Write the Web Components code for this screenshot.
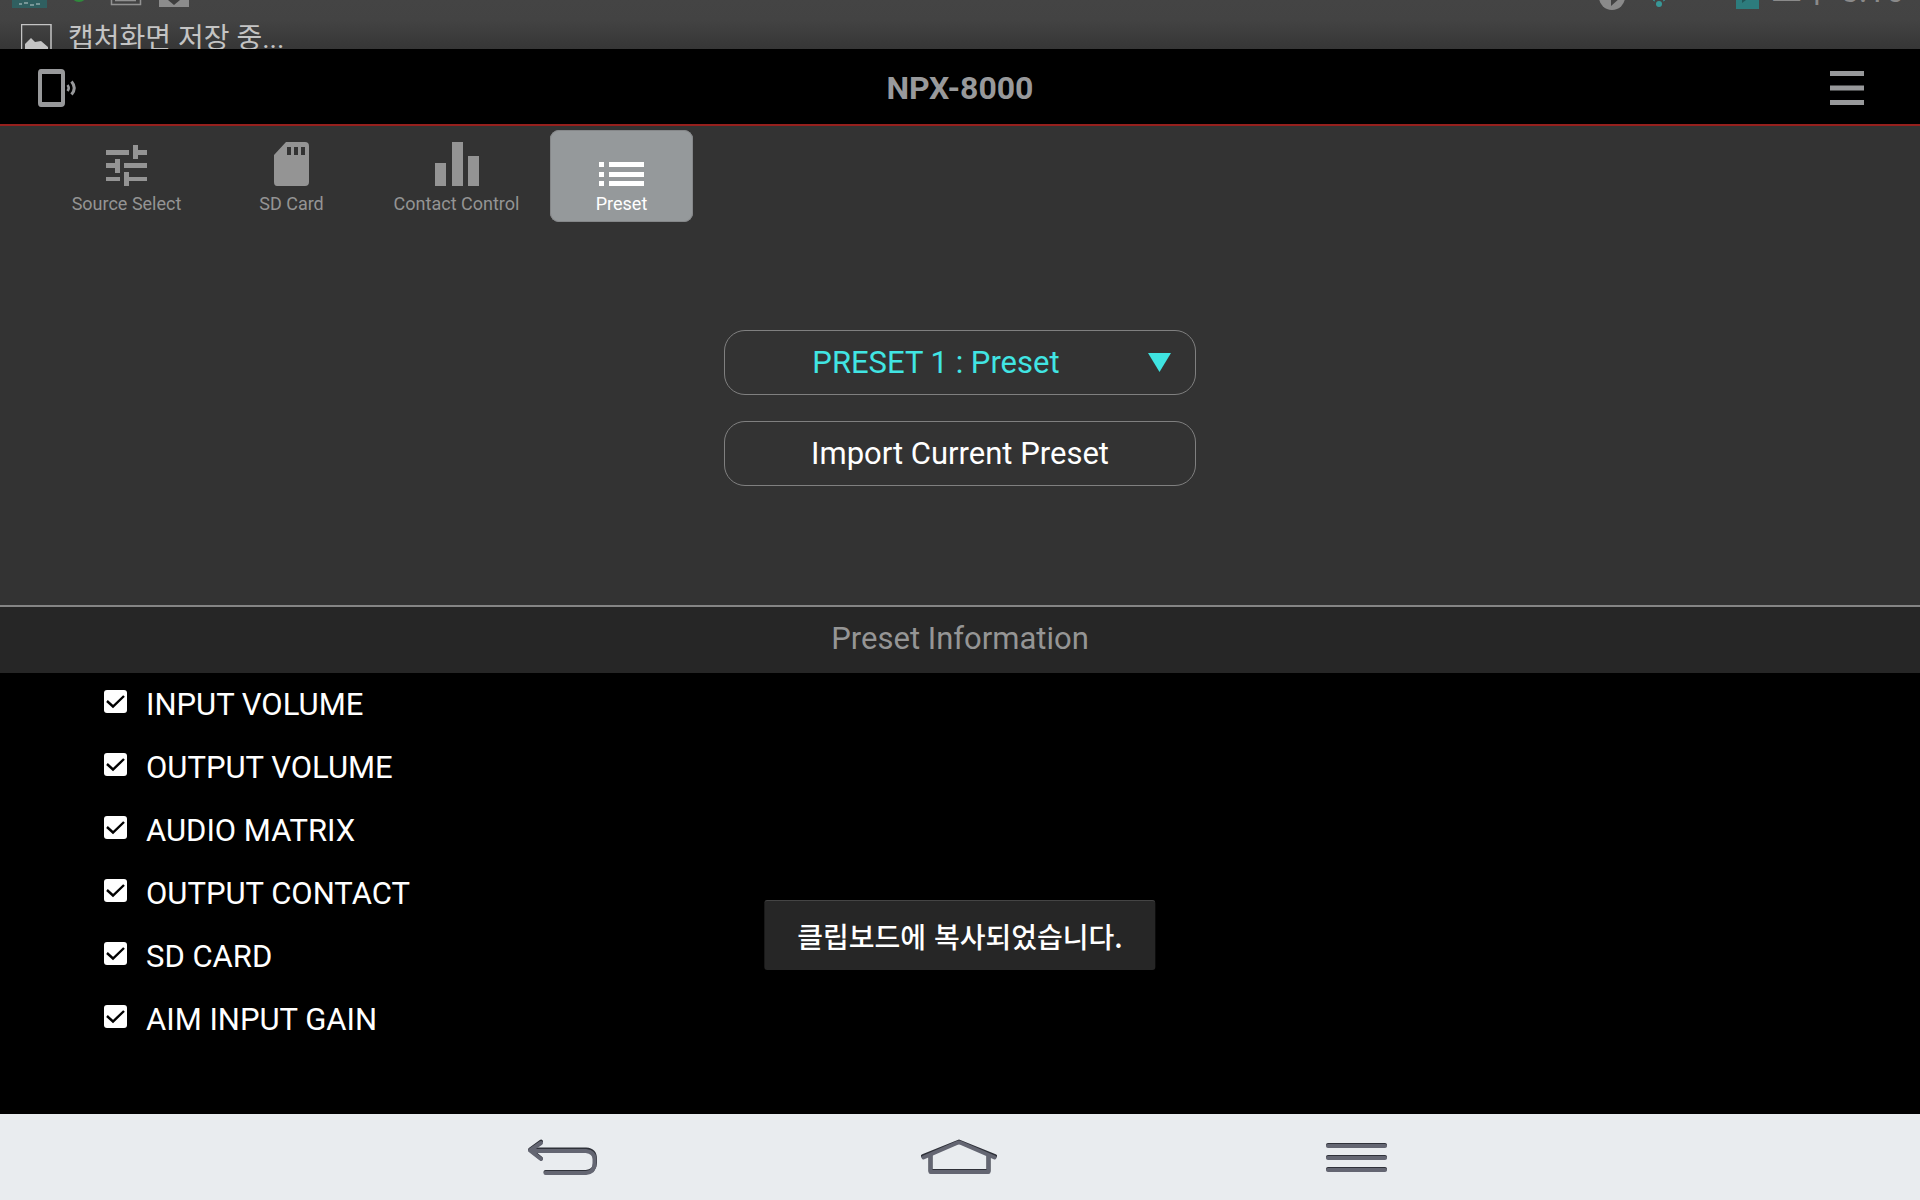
<!DOCTYPE html>
<html lang="ko">
<head>
<meta charset="utf-8">
<title>NPX-8000</title>
<style>
html, body { margin: 0; height: 100%; background: #000; }
body { font-family: Roboto, "Noto Sans CJK KR", sans-serif; color: #fff; }
</style>
</head>
<body>
<npx-app></npx-app>
<script>
const define = (name, html) => {
  const template = document.createElement('template');
  template.innerHTML = html;
  customElements.define(name, class extends HTMLElement {
    constructor() {
      super();
      this.attachShadow({ mode: 'open' }).append(template.content.cloneNode(true));
    }
  });
};

/* Notification shade sliding away at the top of the screen */
define('notification-shade', `
<style>
:host { display: flex; flex-direction: column; flex: none; height: 49px; overflow: hidden;
  background: linear-gradient(#444 0, #434343 20px, #363636 49px); color: #c4c4c4; }
.status { flex: none; height: 12px; display: flex; align-items: flex-end; justify-content: space-between; padding: 0 16px 0 12px; color: #8a8a8a; }
.status svg { display: block; height: 12px; flex: none; }
.right { display: flex; align-items: flex-end; }
time { font-size: 33px; line-height: 30px; margin-bottom: 6px; white-space: nowrap; }
.notice { flex: none; height: 60px; display: flex; align-items: flex-start; gap: 16px; padding: 0 21px; }
.notice svg { display: block; margin-top: 12px; }
.notice span { font-size: 28px; line-height: 38px; margin-top: 8px; }
</style>
<div class="status">
  <svg width="190" height="12" viewBox="0 0 190 12">
    <path d="M0 0H35V8H0z" fill="#305f60"/><path d="M7 4h3m2-1h4m2 2h4m2-1h4" stroke="#8fa9a9" stroke-width="1.5"/>
    <circle cx="67" cy="-6" r="8" fill="#2f8a3c"/>
    <path d="M99.500-3V4.500H128.500V-3M103 .5H124" fill="none" stroke="#929292" stroke-width="1.500"/>
    <path d="M147-2H177V7H147z" fill="#8c8c8c"/><path d="M156 0h12l-6 5z" fill="#3e3e3e"/>
  </svg>
  <div class="right">
    <svg width="172" height="12" viewBox="0 0 172 12">
      <circle cx="13" cy="-3" r="13" fill="#8a8a8a"/><path d="M12-2V6L21-2z" fill="#434343"/>
      <circle cx="60" cy="4" r="3" fill="#389797"/><path d="M54 0l2 1M66 0l-2 1" stroke="#389797"/>
      <path d="M137-3H160V9H137z" fill="#2d7c7d"/><path d="M143 0v3l4-3" fill="#215657"/>
    </svg>
    <time>오후 5:16</time>
  </div>
</div>
<div class="notice">
  <svg width="31" height="38" viewBox="0 0 31 38">
    <path d="M.5.5H30V37.500H.5z" fill="none" stroke="#c4c4c4" stroke-width="1.500"/>
    <path d="M4 36V20L8 16 10 14 14 18 20 17 27 23V36z" fill="#c4c4c4"/>
  </svg>
  <span>캡처화면 저장 중...</span>
</div>`);

define('app-header', `
<style>
:host { display: grid; grid-template-columns: 1fr auto 1fr; align-items: center; flex: none; height: 73px; background: #000;
  border-bottom: 2px solid #96201d; padding: 2px 37px 0; color: #98999b; }
h1 { margin: 0; font-size: 32px; line-height: 40px; font-weight: 700; }
button { background: none; border: 0; padding: 0; color: inherit; display: block; }
button:last-child { justify-self: end; padding-right: 19px; }
svg { display: block; }
</style>
<button aria-label="Device">
  <svg width="40" height="38" viewBox="0 0 40 38" fill="none" stroke="#98999b">
    <path fill="#98999b" stroke="none" fill-rule="evenodd" d="M4 0H24Q28 0 28 4V34Q28 38 24 38H4Q1 38 1 34V4Q1 0 4 0zM5 5V33H24V5z"/>
    <path d="M30.500 16Q33 19 30.500 22" stroke-width="2.500"/><path d="M34.500 12.500Q40 19 34.500 25.500" stroke-width="3"/>
  </svg>
</button>
<h1><slot></slot></h1>
<button aria-label="Menu">
  <svg width="34" height="34" viewBox="0 0 34 34" fill="#98999b"><path d="M0 0H34V5H0zM0 14.500H34V19.500H0zM0 29H34V34H0z"/></svg>
</button>`);

define('nav-tab', `
<style>
:host { display: block; width: 143px; color: #949494; }
button { width: 100%; height: 92px; box-sizing: border-box; padding: 0 0 8px; border: 0; border-radius: 9px; background: none;
  color: inherit; font: 18px/20px Roboto, sans-serif; display: flex; flex-direction: column; align-items: center; justify-content: flex-end; gap: 8px; white-space: nowrap; }
:host([selected]) { color: #fff; }
:host([selected]) button { background: #95999b; box-shadow: inset 0 0 0 1px #858789; }
::slotted(svg) { display: block; fill: currentColor; }
</style>
<button><slot name="icon"></slot><span><slot></slot></span></button>`);

define('preset-select', `
<style>
:host { display: grid; height: 65px; }
select, svg { grid-area: 1 / 1; }
select { appearance: none; width: 100%; height: 100%; box-sizing: border-box; border: 1px solid #808080; border-radius: 21px; background: none;
  color: #41e5e3; font: 31px/40px Roboto, sans-serif; text-align: center; text-align-last: center; padding: 0 70px 0 22px; }
svg { justify-self: end; align-self: center; margin-right: 25px; pointer-events: none; }
</style>
<select aria-label="Preset"><option>PRESET 1 : Preset</option></select>
<svg width="23" height="20" viewBox="0 0 23 20"><path d="M0 0H23L11.500 19z" fill="#3fe4e1"/></svg>`);

define('outline-button', `
<style>
:host { display: block; height: 65px; }
button { width: 100%; height: 100%; box-sizing: border-box; border: 1px solid #808080; border-radius: 21px; background: none;
  color: #fff; font: 31px/40px Roboto, sans-serif; padding: 0; }
</style>
<button><slot></slot></button>`);

define('section-title', `
<style>
:host { display: flex; flex: none; align-items: center; justify-content: center; box-sizing: border-box; height: 68px; background: #262626;
  border-top: 2px solid #858585; padding-bottom: 2px; }
h2 { margin: 0; font-weight: 400; font-size: 31px; line-height: 40px; color: #959595; }
</style>
<h2><slot></slot></h2>`);

define('check-row', `
<style>
:host { display: block; }
label { display: flex; align-items: center; gap: 19px; height: 63px; font-size: 31px; line-height: 40px; }
.box { display: grid; margin-bottom: 6px; }
input, svg { grid-area: 1 / 1; width: 23px; height: 23px; margin: 0; display: block; }
input { appearance: none; background: #fff; border-radius: 3px; }
svg { pointer-events: none; visibility: hidden; }
input:checked + svg { visibility: visible; }
</style>
<label><span class="box"><input type="checkbox" checked><svg viewBox="0 0 23 23"><path d="M3 11L9 16.500 20 6" fill="none" stroke="#000" stroke-width="2.400"/></svg></span><span><slot></slot></span></label>`);

define('toast-message', `
<style>
:host { position: fixed; left: 50%; bottom: 230px; transform: translateX(-50%); box-sizing: border-box; padding: 15px 33px 14px;
  background: #262626; border-top: 1px solid #444; border-radius: 3px; font: 500 28px/40px "Noto Sans CJK KR", sans-serif; color: #fff; white-space: nowrap; }
</style>
<slot></slot>`);

define('system-bar', `
<style>
:host { display: flex; flex: none; align-items: center; justify-content: center; gap: 321px; height: 86px; padding-right: 2px; background: #e9ecef; }
button { border: 0; padding: 0; background: none; display: block; }
svg { display: block; fill: none; stroke-linecap: round; stroke-linejoin: round; }
.d { stroke: #2f3139; stroke-width: 4; }
.l { stroke: #646672; stroke-width: 4; }
</style>
<button aria-label="Back"><svg width="76" height="40" viewBox="0 0 76 40">
  <path class="d" d="M17 4.500L6 12.500 17 21.500M8 12.500H62Q71 13 71 22V26Q71 34 62 35H21.500"/>
  <path class="l" d="M17 6L6 13.500 17 22M8 14H62Q70.500 15 70.500 22V27Q70.500 35 62 36H21.500"/>
</svg></button>
<button aria-label="Home"><svg width="76" height="40" viewBox="0 0 76 40">
  <path class="d" d="M2 19L38 4.500 74 19M9.500 18V34H67.500V18"/>
  <path class="l" d="M2.500 20.500L36 6Q38 5 40 6L73.500 20.500M9.500 18V35H67.500V18"/>
</svg></button>
<button aria-label="Recent"><svg width="76" height="40" viewBox="0 0 76 40">
  <path class="d" d="M10 8H67M10 20H67M10 32H67"/>
  <path class="l" d="M10 9H67M10 21H67M10 33H67"/>
</svg></button>`);

define('npx-app', `
<style>
:host { display: flex; flex-direction: column; min-height: 100vh; }
main { flex: 1; display: flex; flex-direction: column; }
.control { flex: 479 0 0; background: #333; display: flex; flex-direction: column; }
nav { display: flex; gap: 22px; padding: 4px 55px 0; }
.actions { display: flex; flex-direction: column; gap: 26px; width: 472px; max-width: 100%; margin: 108px auto 40px; }
.list { flex: 441 0 0; background: #000; padding: 0 104px; }
</style>
<notification-shade></notification-shade>
<app-header>NPX-8000</app-header>
<main>
  <section class="control">
    <nav>
      <nav-tab>Source Select<svg slot="icon" width="42" height="42" viewBox="0 0 42 42"><path d="M0 6H23V11H0zM27 1H32V6H41V11H32V15H27zM0 19H9V15H14V29H9V24H0zM18 19H41V24H18zM0 33H14V37H0zM18 28H23V33H41V37H23V42H18z"/></svg></nav-tab>
      <nav-tab>SD Card<svg slot="icon" width="36" height="44" viewBox="1 0 36 44"><path fill-rule="evenodd" d="M13 0H32Q36 0 36 4V40Q36 44 32 44H4Q1 44 1 40V13zM14 5V13H18V5zM21 5V13H25V5zM28 5V13H32V5z"/></svg></nav-tab>
      <nav-tab>Contact Control<svg slot="icon" width="44" height="44" viewBox="0 0 44 44"><path d="M0 21H11V44H0zM17 0H28V44H17zM33 14H44V44H33z"/></svg></nav-tab>
      <nav-tab selected>Preset<svg slot="icon" width="45" height="24" viewBox="0 0 45 24"><path d="M0 0H5V5H0zM10 0H45V5H10zM0 10H5V15H0zM10 10H45V15H10zM0 19H5V24H0zM10 19H45V24H10z"/></svg></nav-tab>
    </nav>
    <div class="actions">
      <preset-select></preset-select>
      <outline-button>Import Current Preset</outline-button>
    </div>
  </section>
  <section-title>Preset Information</section-title>
  <section class="list">
    <check-row>INPUT VOLUME</check-row>
    <check-row>OUTPUT VOLUME</check-row>
    <check-row>AUDIO MATRIX</check-row>
    <check-row>OUTPUT CONTACT</check-row>
    <check-row>SD CARD</check-row>
    <check-row>AIM INPUT GAIN</check-row>
  </section>
</main>
<system-bar></system-bar>
<toast-message>클립보드에 복사되었습니다.</toast-message>`);
</script>
</body>
</html>
